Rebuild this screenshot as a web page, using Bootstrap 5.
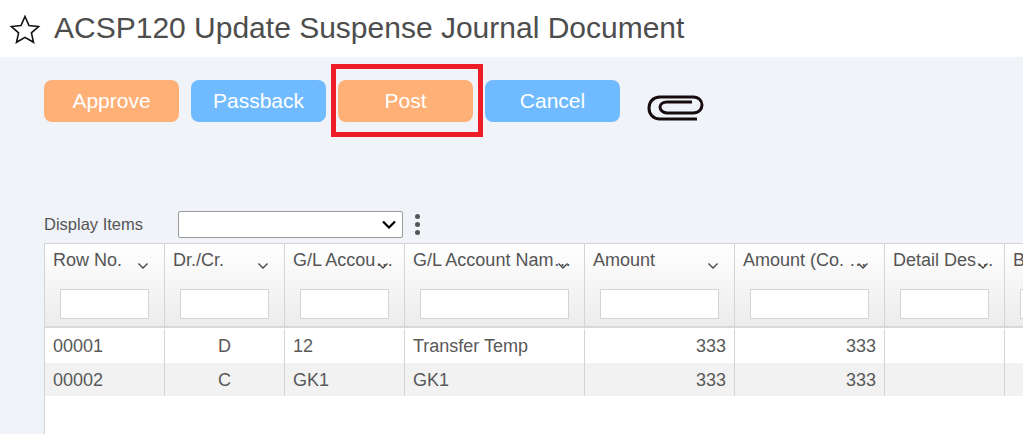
<!DOCTYPE html>
<html lang="en">
<head>
    <meta charset="UTF-8">
    <meta name="viewport" content="width=device-width, initial-scale=1.0">
    <title>ACSP120 Update Suspense Journal Document</title>
    <link href="https://cdn.jsdelivr.net/npm/bootstrap@5.3.0/dist/css/bootstrap.min.css" rel="stylesheet">
    <style>
        html, body { height: 434px; overflow: hidden; }
        body { background: #f0f3f8; font-family: "Liberation Sans", Arial, sans-serif; color: #555; position: relative; }
        .page-head { height: 57px; background: #fff; padding: 0 0 2px 9px; gap: 13px; }
        .page-head svg { margin-top: 2px; }
        .page-head h1 { font-size: 30px; font-weight: 400; color: #4d4d4d; margin: 0; line-height: 1; }
        .action-bar { padding: 23px 0 0 44px; gap: 12px; height: 151px; }
        .action-btn { width: 135px; height: 42px; border: 0; border-radius: 8px; color: #fff; font-size: 21px; line-height: 1; padding: 0 0 2px; }
        .btn-orange, .btn-orange:hover { background: #ffb077; color: #fff; }
        .btn-sky, .btn-sky:hover { background: #70baff; color: #fff; }
        .clip-icon { margin: 4px 0 0 15px; }
        .red-box { position: absolute; left: 331px; top: 64px; width: 152px; height: 73px; border: 5px solid #ee1c25; }
        .display-row { padding: 0 0 2px 44px; height: 35px; font-size: 16.500px; color: #555; }
        .display-row label { width: 134px; }
        .display-select { width: 225px; height: 27px; border: 1px solid #999; border-radius: 2px; padding: 0 6px; font-size: 14px; color: #222; background-color: #fff;
            background-image: url("data:image/svg+xml,%3csvg xmlns='http://www.w3.org/2000/svg' viewBox='0 0 14 9'%3e%3cpath fill='none' stroke='%23000' stroke-width='2.200' d='M1 1.500l6 6 6-6'/%3e%3c/svg%3e");
            background-size: 14px 9px; background-position: right 6px center; }
        .dots { gap: 3px; margin-left: 12px; }
        .dots span { width: 5px; height: 5px; border-radius: 50%; background: #555; }
        .grid-wrap { margin-left: 44px; height: 191px; background: #fff; border-left: 1px solid #d4d4d4; border-top: 1px solid #d4d4d4; overflow: hidden; }
        .data-grid { table-layout: fixed; width: 1080px; border-collapse: separate; border-spacing: 0; margin: 0; }
        .data-grid th { height: 84px; padding: 0; vertical-align: top; font-weight: 400; position: relative; border-right: 1px solid #d4d4d4; border-bottom: 2px solid #d9d9d9; background: linear-gradient(#fff, #ececec); }
        .col-label { display: block; font-size: 18px; line-height: 20px; padding: 6px 12px 0 8px; color: #555; white-space: nowrap; overflow: hidden; text-overflow: ellipsis; }
        .col-caret { position: absolute; right: 15px; top: 18px; }
        .filter-box { position: absolute; left: 15px; right: 15px; top: 45px; height: 30px; background: #fff; border: 1px solid #d4d4d4; }
        .data-grid td { height: 33px; padding: 0 8px; font-size: 18px; line-height: 1; color: #595959; border-right: 1px solid #d4d4d4; vertical-align: middle; }
        .data-grid tr:first-child td { height: 35px; border-top: 2px solid #fff; padding-bottom: 2px; }
        .data-grid tr.alt td { background: #f2f2f2; }
    </style>
</head>
<body>
    <div class="page-head d-flex align-items-center">
        <svg width="32" height="30" viewBox="0 0 32 30"><path d="M16 2.500l4 9 9.600 1-7.200 6.400 2.100 9.400-8.500-4.900-8.500 4.900 2.100-9.400L2.400 12.500l9.600-1z" fill="none" stroke="#111" stroke-width="1.600"/></svg>
        <h1>ACSP120 Update Suspense Journal Document</h1>
    </div>

    <div class="action-bar d-flex align-items-start">
        <button class="btn action-btn btn-orange">Approve</button>
        <button class="btn action-btn btn-sky">Passback</button>
        <button class="btn action-btn btn-orange">Post</button>
        <button class="btn action-btn btn-sky">Cancel</button>
        <svg class="clip-icon" width="58" height="38" viewBox="0 0 58 38"><path d="M50 35H13C6 35 2 30 2 24C2 18 6 13 13 13H46C52 13 55 17 55 21C55 25 52 29 46 29H20C16 29 13 26 13 23C13 20 16 18 20 18H45" fill="none" stroke="#160c0e" stroke-width="3"/></svg>
    </div>
    <div class="red-box"></div>

    <div class="display-row d-flex align-items-center">
        <label>Display Items</label>
        <select class="form-select display-select"><option></option></select>
        <div class="dots d-flex flex-column"><span></span><span></span><span></span></div>
    </div>

    <div class="grid-wrap">
        <table class="data-grid">
            <colgroup id="cols"></colgroup>
            <thead><tr id="head-row"></tr></thead>
            <tbody>
                <tr>
                    <td>00001</td><td class="text-center">D</td><td>12</td><td>Transfer Temp</td>
                    <td class="text-end">333</td><td class="text-end">333</td><td></td><td></td>
                </tr>
                <tr class="alt">
                    <td>00002</td><td class="text-center">C</td><td>GK1</td><td>GK1</td>
                    <td class="text-end">333</td><td class="text-end">333</td><td></td><td></td>
                </tr>
            </tbody>
        </table>
    </div>

    <script>
        // pad = room kept right of the label, decides where the ellipsis falls
        const columns = [
            { w: 120, pad: 12, label: "Row No." },
            { w: 120, pad: 12, label: "Dr./Cr." },
            { w: 120, pad: 10, label: "G/L Account Code" },
            { w: 180, pad: 8, label: "G/L Account Name Long" },
            { w: 150, pad: 12, label: "Amount" },
            { w: 150, pad: 12, label: "Amount (Co. Currency)" },
            { w: 120, pad: 6, label: "Detail Description" },
            { w: 120, pad: 12, label: "B" }
        ];
        const caret = '<svg class="col-caret" width="12" height="8" viewBox="0 0 12 8"><path d="M1.500 1.500L6 6l4.500-4.500" fill="none" stroke="#444" stroke-width="1.300"/></svg>';
        document.getElementById("cols").innerHTML = columns.map(c => `<col style="width:${c.w}px">`).join("");
        document.getElementById("head-row").innerHTML = columns.map(c => `<th>
            <span class="col-label" style="padding-right:${c.pad}px">${c.label}</span>
            ${caret}
            <span class="filter-box"></span>
        </th>`).join("");
    </script>
    <script src="https://cdn.jsdelivr.net/npm/bootstrap@5.3.0/dist/js/bootstrap.bundle.min.js"></script>
</body>
</html>
